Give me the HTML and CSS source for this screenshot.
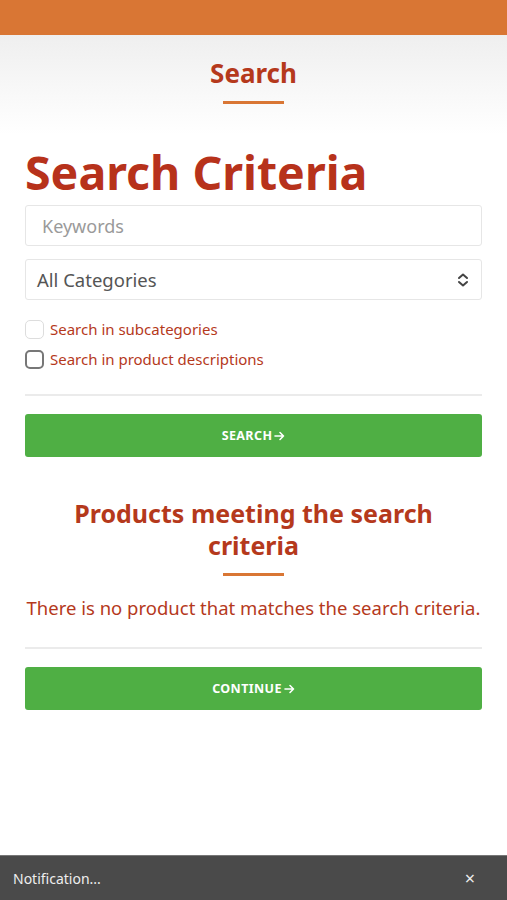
FILE: index.html
```html
<!DOCTYPE html>
<html>
<head>
<meta charset="utf-8">
<link rel="stylesheet" href="styles.css">
</head>
<body>
<div class="topbar"></div>
<header class="page-head">
  <h1 class="page-title">Search</h1>
  <div class="rule-accent"></div>
</header>
<main class="content">
  <h2 class="criteria-title">Search Criteria</h2>
  <input class="field" type="text" placeholder="Keywords">
  <div class="field select">
    <span>All Categories</span>
    <svg class="chev" width="14" height="16" viewBox="0 0 14 16"><path d="M3 6 L7 2.5 L11 6 M3 10 L7 13.5 L11 10" fill="none" stroke="#444" stroke-width="2" stroke-linecap="round" stroke-linejoin="round"/></svg>
  </div>
  <label class="check"><span class="box light"></span>Search in subcategories</label>
  <label class="check"><span class="box dark"></span>Search in product descriptions</label>
  <hr class="divider">
  <button class="btn">SEARCH<svg class="arrow" width="11" height="10" viewBox="0 0 11 10"><path d="M1 5 H9.5 M6 1.5 L9.5 5 L6 8.5" fill="none" stroke="#fff" stroke-width="1.6" stroke-linecap="round" stroke-linejoin="round"/></svg></button>
  <h3 class="results-title">Products meeting the search criteria</h3>
  <div class="rule-accent"></div>
  <p class="empty">There is no product that matches the search criteria.</p>
  <hr class="divider divider-low">
  <button class="btn">CONTINUE<svg class="arrow" width="11" height="10" viewBox="0 0 11 10"><path d="M1 5 H9.5 M6 1.5 L9.5 5 L6 8.5" fill="none" stroke="#fff" stroke-width="1.6" stroke-linecap="round" stroke-linejoin="round"/></svg></button>
</main>
<div class="notify">
  <span>Notification...</span>
  <span class="close">×</span>
</div>
</body>
</html>
```

FILE: styles.css
```css
* { box-sizing: border-box; }
html, body { margin: 0; padding: 0; }
body {
  font-family: "Noto Sans", "Open Sans", sans-serif;
  background: #fff;
  width: 507px;
  height: 900px;
  overflow: hidden;
  position: relative;
}
.topbar { height: 35px; background: #d97634; }
.page-head {
  height: 100px;
  background: linear-gradient(#efefef, #ffffff);
  display: flex;
  flex-direction: column;
  align-items: center;
  padding-top: 22px;
}
.page-title {
  margin: 0;
  font-size: 26px;
  line-height: 32px;
  font-weight: 700;
  color: #b5391c;
}
.rule-accent {
  width: 61px;
  height: 3px;
  background: #d97634;
  margin: 12px auto 0;
}
.content {
  padding: 9px 25px 0;
  display: flex;
  flex-direction: column;
}
.criteria-title {
  margin: 0;
  font-size: 46.5px;
  line-height: 56px;
  font-weight: 700;
  color: #b7321b;
}
.field {
  height: 41px;
  border: 1px solid #e6e6e6;
  border-radius: 3px;
  background: #fff;
  font-family: inherit;
  font-size: 18px;
  padding: 0 16px;
  margin-top: 5px;
  width: 100%;
  outline: none;
}
.field::placeholder { color: #9a9a9a; }
.select {
  margin-top: 13px;
  display: flex;
  align-items: center;
  justify-content: space-between;
  padding: 0 11px 0 11px;
  color: #555;
  font-size: 18.5px;
}
.check {
  display: flex;
  align-items: center;
  gap: 6px;
  color: #b5391c;
  font-size: 15px;
  height: 20px;
}
.check:first-of-type { margin-top: 19px; }
.check + .check { margin-top: 10px; }
.box {
  width: 19px;
  height: 19px;
  border-radius: 5px;
  border: 1.5px solid #ddd;
  display: inline-block;
}
.box.dark { border: 2px solid #777; }
.divider {
  border: 0;
  border-top: 2px solid #ebebeb;
  margin: 25px 0 0;
}
.divider-low { margin-top: 27px; }
.btn {
  margin-top: 18px;
  height: 43px;
  background: #4faf44;
  border: 0;
  border-radius: 3px;
  color: #fff;
  font-family: inherit;
  font-weight: 700;
  font-size: 12.5px;
  letter-spacing: 0.4px;
  display: flex;
  align-items: center;
  justify-content: center;
}
.arrow { margin-left: 2px; }
.results-title {
  margin: 40px 0 0;
  text-align: center;
  font-size: 25px;
  line-height: 32px;
  font-weight: 700;
  color: #b5391c;
  padding: 0 40px;
}
.empty {
  margin: 20px 0 0;
  text-align: center;
  color: #b5391c;
  font-size: 18.5px;
  line-height: 24px;
  white-space: nowrap;
}
.notify {
  position: absolute;
  left: 0;
  right: 0;
  bottom: 0;
  height: 45px;
  background: #4a4a4a;
  border-top: 1px solid #777;
  color: #eee;
  font-size: 14px;
  display: flex;
  align-items: center;
  justify-content: space-between;
  padding: 0 32px 0 13px;
}
.close { font-size: 18px; }
```
